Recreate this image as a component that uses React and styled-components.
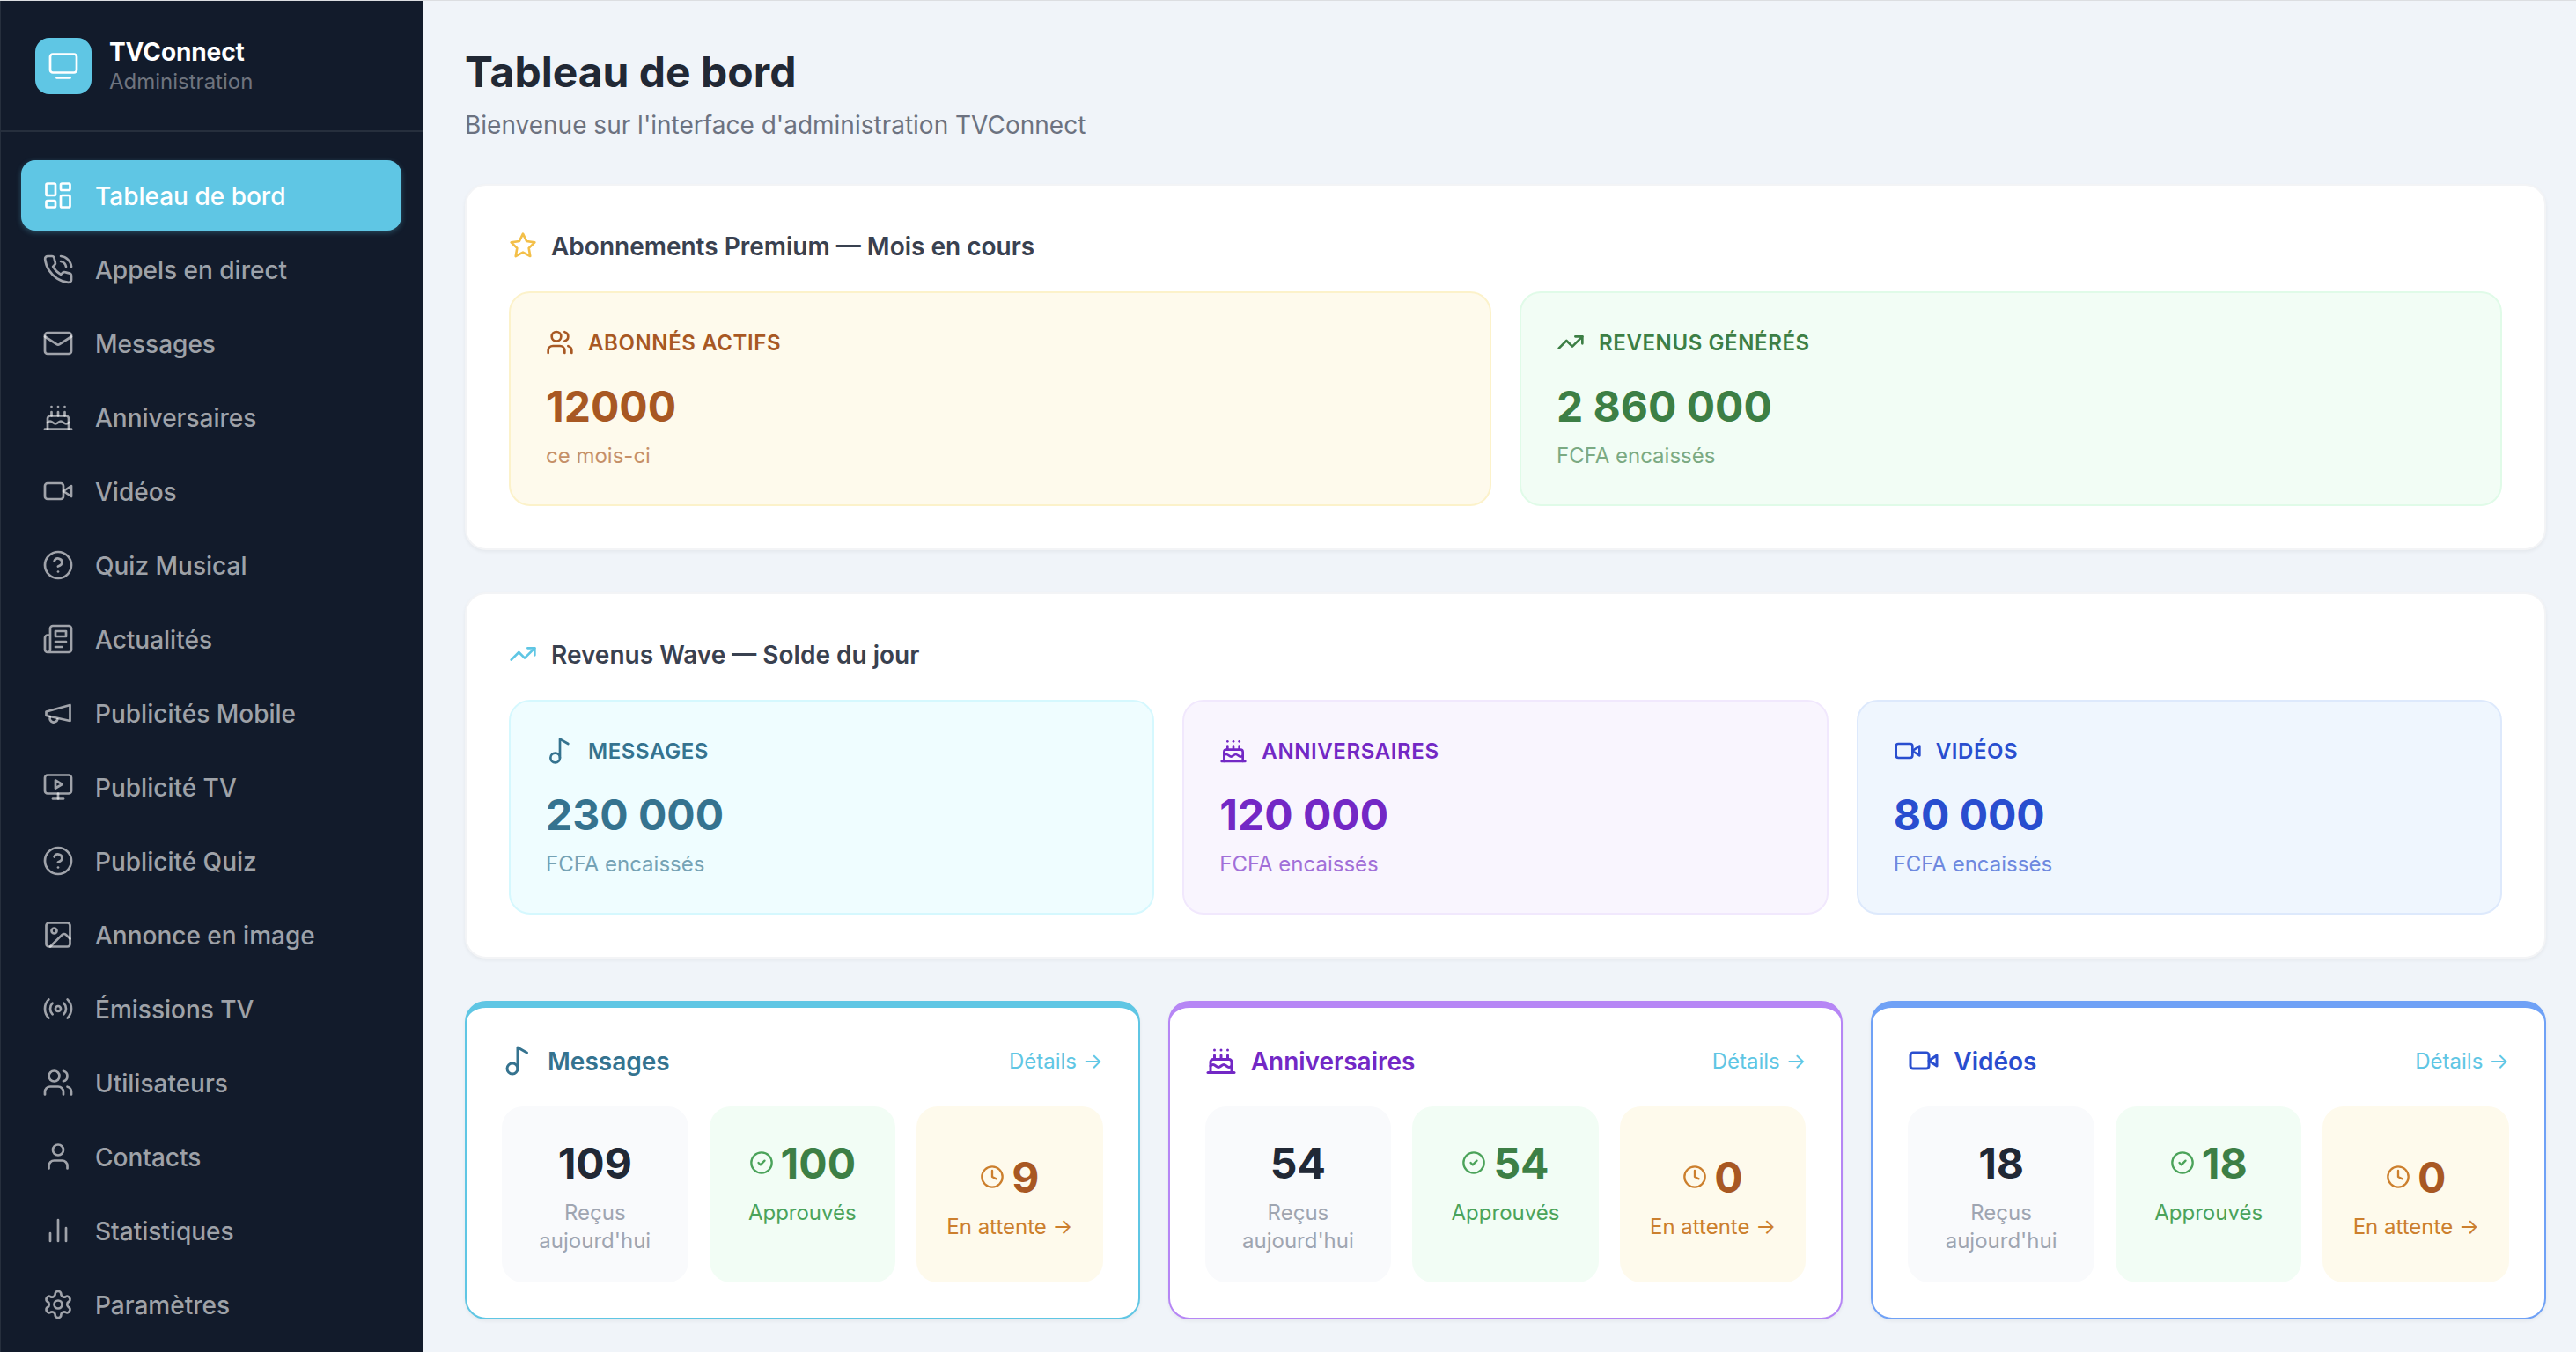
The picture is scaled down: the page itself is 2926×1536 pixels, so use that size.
import styled, { createGlobalStyle } from "styled-components"
import {
  Cake,
  CircleCheck,
  CircleHelp,
  Clock,
  Image as ImageIcon,
  LayoutDashboard,
  Music2,
  Radio,
  TrendingUp,
  TvMinimal,
  User,
  Users,
} from "lucide-react"

const GlobalStyle = createGlobalStyle`
* {
  box-sizing: border-box;
  margin: 0;
  padding: 0;
}

body {
  font-family: Inter, "Liberation Sans", sans-serif;
  background-color: #f0f4f9;
  overflow: hidden;
}
`

const Page = styled.div`
  display: flex;
  height: 1536px;
  border-top: 1px solid #dcdee1;
  overflow: hidden;
`

/* ---------- sidebar ---------- */

const Sidebar = styled.aside`
  width: 480px;
  flex-shrink: 0;
  background-color: #121b2b;
  border-left: 1px solid #262f3d;
`

const Brand = styled.div`
  display: flex;
  align-items: center;
  gap: 20px;
  height: 149px;
  padding: 0 39px;
  border-bottom: 2px solid #262f3d;
`

const Logo = styled.div`
  width: 64px;
  height: 64px;
  display: flex;
  align-items: center;
  justify-content: center;
  border-radius: 16px;
  background-color: #5fc6e4;
  color: white;
`

const BrandText = styled.div`
  padding-top: 3px;
`

const BrandName = styled.p`
  font-size: 28px;
  line-height: 33px;
  font-weight: 700;
  letter-spacing: -0.1px;
  color: white;
`

const BrandRole = styled.p`
  font-size: 24px;
  line-height: 33px;
  color: #6f747e;
`

const Nav = styled.nav`
  display: flex;
  flex-direction: column;
  gap: 4px;
  padding: 32px 24px 0 23px;
`

const NavItem = styled.a`
  display: flex;
  align-items: center;
  gap: 24px;
  height: 80px;
  flex-shrink: 0;
  padding: 0 24px;
  border-radius: 16px;
  font-size: 28px;
  font-weight: 500;
  color: ${(p) => (p.$active ? "white" : "rgba(255,255,255,0.6)")};
  background-color: ${(p) => (p.$active ? "#5fc6e4" : "transparent")};
  box-shadow: ${(p) => (p.$active ? "0 2px 6px rgba(95,198,228,0.3)" : "none")};
`

// text sitting next to an icon, nudged onto its optical centre
const Label = styled.span`
  padding-top: 2px;
`

/* ---------- content ---------- */

const Main = styled.main`
  flex: 1;
  min-width: 0;
  padding: 48px 34px 0 48px;
`

const Title = styled.h1`
  font-size: 48px;
  line-height: 66px;
  font-weight: 700;
  color: #212835;
`

const Subtitle = styled.p`
  margin: 7px 0 46px;
  font-size: 28px;
  line-height: 41px;
  color: #6c7280;
`

const Card = styled.section`
  height: 416px;
  margin-bottom: 48px;
  padding: 48px;
  background-color: white;
  border: 2px solid #f3f4f6;
  border-radius: 24px;
  box-shadow: 0 2px 4px rgba(0, 0, 0, 0.05);
`

const CardHeading = styled.h2`
  display: flex;
  align-items: center;
  gap: 16px;
  height: 40px;
  margin-bottom: 32px;
  font-size: 28px;
  font-weight: 600;
  color: #394150;
`

const Grid = styled.div`
  display: grid;
  grid-template-columns: repeat(${(p) => p.$cols}, minmax(0, 1fr));
  gap: ${(p) => p.$gap || 32}px;
`

const Stat = styled.div`
  height: 244px;
  padding: 40px;
  border: 2px solid ${(p) => p.$tone.border};
  border-radius: 24px;
  background-color: ${(p) => p.$tone.bg};
  color: ${(p) => p.$tone.text};
`

const StatLabel = styled.div`
  display: flex;
  align-items: center;
  gap: 16px;
  height: 32px;
  margin-bottom: 24px;
  font-size: 24px;
  font-weight: 600;
  letter-spacing: 0.025em;
  text-transform: uppercase;
`

const Value = styled.p`
  height: 64px;
  font-size: 48px;
  line-height: 66px;
  font-weight: 700;
  white-space: nowrap;
`

const StatNote = styled.p`
  margin-top: 9px;
  font-size: 24px;
  line-height: 32px;
  opacity: 0.65;
`

const Summary = styled.section`
  height: 362px;
  padding: 40px;
  background-color: white;
  border: 2px solid ${(p) => p.$color};
  border-top-width: 8px;
  border-radius: 24px;
  box-shadow: 0 2px 4px rgba(0, 0, 0, 0.05);
`

const SummaryHeader = styled.div`
  display: flex;
  align-items: center;
  justify-content: space-between;
  height: 40px;
  margin-bottom: 32px;
`

const SummaryTitle = styled.h3`
  display: flex;
  align-items: center;
  gap: 16px;
  font-size: 28px;
  font-weight: 600;
  color: ${(p) => p.$color};
`

const DetailsLink = styled.a`
  padding-top: 2px;
  font-size: 24px;
  line-height: 32px;
  color: #5fc6e4;
`

const Tile = styled.div`
  display: flex;
  flex-direction: column;
  align-items: center;
  justify-content: ${(p) => (p.$center ? "center" : "flex-start")};
  height: 200px;
  padding: 32px 16px 31px;
  border-radius: 24px;
  text-align: center;
  background-color: ${(p) => p.$bg};
  color: ${(p) => p.$color};
`

const TileTop = styled.div`
  display: flex;
  align-items: center;
  gap: 8px;

  svg {
    color: ${(p) => p.$icon};
  }
`

const TileLabel = styled.p`
  max-width: 148px;
  margin-top: 9px;
  font-size: 24px;
  line-height: 32px;
  color: ${(p) => p.$color};
`

/* ---------- icons missing from lucide-react in this shape ---------- */

const Svg = ({ size = 24, strokeWidth = 2, color = "currentColor", children }) => (
  <svg
    width={size}
    height={size}
    viewBox="0 0 24 24"
    fill="none"
    stroke={color}
    strokeWidth={strokeWidth}
    strokeLinecap="round"
    strokeLinejoin="round"
  >
    {children}
  </svg>
)

const PhoneCall = (props) => (
  <Svg {...props}>
    <path d="M22 16.92v3a2 2 0 0 1-2.18 2 19.79 19.79 0 0 1-8.63-3.07 19.5 19.5 0 0 1-6-6 19.79 19.79 0 0 1-3.07-8.67A2 2 0 0 1 4.11 2h3a2 2 0 0 1 2 1.72 12.84 12.84 0 0 0 .7 2.81 2 2 0 0 1-.45 2.11L8.09 9.91a16 16 0 0 0 6 6l1.27-1.27a2 2 0 0 1 2.11-.45 12.84 12.84 0 0 0 2.81.7A2 2 0 0 1 22 16.92z" />
    <path d="M14.05 2a9 9 0 0 1 8 7.94" />
    <path d="M14.05 6A5 5 0 0 1 18 10" />
  </Svg>
)

const Mail = (props) => (
  <Svg {...props}>
    <rect width="20" height="16" x="2" y="4" rx="2" />
    <path d="m22 7-8.97 5.7a1.94 1.94 0 0 1-2.06 0L2 7" />
  </Svg>
)

const Video = (props) => (
  <Svg {...props}>
    <path d="m22 8-6 4 6 4V8Z" />
    <rect width="14" height="12" x="2" y="6" rx="2" />
  </Svg>
)

const Newspaper = (props) => (
  <Svg {...props}>
    <path d="M4 22h16a2 2 0 0 0 2-2V4a2 2 0 0 0-2-2H8a2 2 0 0 0-2 2v16a2 2 0 0 1-2 2Zm0 0a2 2 0 0 1-2-2v-9c0-1.1.9-2 2-2h2" />
    <path d="M18 14h-8" />
    <path d="M15 18h-5" />
    <path d="M10 6h8v4h-8V6Z" />
  </Svg>
)

const Megaphone = (props) => (
  <Svg {...props}>
    <path d="m3 11 18-5v12L3 14v-3z" />
    <path d="M11.6 16.8a3 3 0 1 1-5.8-1.6" />
  </Svg>
)

const MonitorPlay = (props) => (
  <Svg {...props}>
    <path d="m10 7 5 3-5 3Z" />
    <rect width="20" height="14" x="2" y="3" rx="2" />
    <path d="M12 17v4" />
    <path d="M8 21h8" />
  </Svg>
)

const BarChart = (props) => (
  <Svg {...props}>
    <path d="M18 20V10" />
    <path d="M12 20V4" />
    <path d="M6 20v-6" />
  </Svg>
)

const Settings = (props) => (
  <Svg {...props}>
    <path d="M12.22 2h-.44a2 2 0 0 0-2 2v.18a2 2 0 0 1-1 1.73l-.43.25a2 2 0 0 1-2 0l-.15-.08a2 2 0 0 0-2.73.73l-.22.38a2 2 0 0 0 .73 2.73l.15.1a2 2 0 0 1 1 1.72v.51a2 2 0 0 1-1 1.74l-.15.09a2 2 0 0 0-.73 2.73l.22.38a2 2 0 0 0 2.73.73l.15-.08a2 2 0 0 1 2 0l.43.25a2 2 0 0 1 1 1.73V20a2 2 0 0 0 2 2h.44a2 2 0 0 0 2-2v-.18a2 2 0 0 1 1-1.73l.43-.25a2 2 0 0 1 2 0l.15.08a2 2 0 0 0 2.73-.73l.22-.39a2 2 0 0 0-.73-2.73l-.15-.08a2 2 0 0 1-1-1.74v-.5a2 2 0 0 1 1-1.74l.15-.09a2 2 0 0 0 .73-2.73l-.22-.38a2 2 0 0 0-2.73-.73l-.15.08a2 2 0 0 1-2 0l-.43-.25a2 2 0 0 1-1-1.73V4a2 2 0 0 0-2-2z" />
    <circle cx="12" cy="12" r="3" />
  </Svg>
)

const Star = (props) => (
  <Svg {...props}>
    <polygon points="12 2 15.09 8.26 22 9.27 17 14.14 18.18 21.02 12 17.77 5.82 21.02 7 14.14 2 9.27 8.91 8.26 12 2" />
  </Svg>
)

/* ---------- data ---------- */

const navItems = [
  { label: "Tableau de bord", icon: LayoutDashboard },
  { label: "Appels en direct", icon: PhoneCall },
  { label: "Messages", icon: Mail },
  { label: "Anniversaires", icon: Cake },
  { label: "Vidéos", icon: Video },
  { label: "Quiz Musical", icon: CircleHelp },
  { label: "Actualités", icon: Newspaper },
  { label: "Publicités Mobile", icon: Megaphone },
  { label: "Publicité TV", icon: MonitorPlay },
  { label: "Publicité Quiz", icon: CircleHelp },
  { label: "Annonce en image", icon: ImageIcon },
  { label: "Émissions TV", icon: Radio },
  { label: "Utilisateurs", icon: Users },
  { label: "Contacts", icon: User },
  { label: "Statistiques", icon: BarChart },
  { label: "Paramètres", icon: Settings },
]

const tones = {
  amber: { bg: "#fefaec", border: "#fcf2ca", text: "#a85823" },
  green: { bg: "#f2fdf5", border: "#e0fbe8", text: "#3d7f45" },
  cyan: { bg: "#effdff", border: "#d5f8fe", text: "#35738f" },
  purple: { bg: "#f9f5fe", border: "#f1e8fd", text: "#7328c5" },
  blue: { bg: "#eff6fe", border: "#dde9fc", text: "#294ecf" },
}

const premium = [
  { label: "Abonnés actifs", value: "12000", note: "ce mois-ci", icon: Users, tone: tones.amber },
  { label: "Revenus générés", value: "2 860 000", note: "FCFA encaissés", icon: TrendingUp, tone: tones.green },
]

const wave = [
  { label: "Messages", value: "230 000", note: "FCFA encaissés", icon: Music2, tone: tones.cyan },
  { label: "Anniversaires", value: "120 000", note: "FCFA encaissés", icon: Cake, tone: tones.purple },
  { label: "Vidéos", value: "80 000", note: "FCFA encaissés", icon: Video, tone: tones.blue },
]

const summaries = [
  { title: "Messages", icon: Music2, color: "#35738f", border: "#5fc6e4", received: 109, approved: 100, pending: 9 },
  { title: "Anniversaires", icon: Cake, color: "#7328c5", border: "#b686f5", received: 54, approved: 54, pending: 0 },
  { title: "Vidéos", icon: Video, color: "#294ecf", border: "#6fa1f6", received: 18, approved: 18, pending: 0 },
]

const StatCard = ({ item }) => {
  const Icon = item.icon
  return (
    <Stat $tone={item.tone}>
      <StatLabel>
        <Icon size={32} />
        {item.label}
      </StatLabel>
      <Value>{item.value}</Value>
      <StatNote>{item.note}</StatNote>
    </Stat>
  )
}

const SummaryCard = ({ item }) => {
  const Icon = item.icon
  return (
    <Summary $color={item.border}>
      <SummaryHeader>
        <SummaryTitle $color={item.color}>
          <Icon size={36} />
          <Label>{item.title}</Label>
        </SummaryTitle>
        <DetailsLink>Détails →</DetailsLink>
      </SummaryHeader>
      <Grid $cols={3} $gap={24}>
        <Tile $bg="#f9fafc" $color="#212835">
          <Value>{item.received}</Value>
          <TileLabel $color="#9fa5b1">Reçus aujourd'hui</TileLabel>
        </Tile>
        <Tile $bg="#f2fdf5" $color="#3d7f45">
          <TileTop $icon="#4ba35a">
            <CircleCheck size={28} />
            <Value>{item.approved}</Value>
          </TileTop>
          <TileLabel $color="#4ba35a">Approuvés</TileLabel>
        </Tile>
        <Tile $bg="#fefaec" $color="#a85823" $center>
          <TileTop $icon="#cc7f2d">
            <Clock size={28} />
            <Value>{item.pending}</Value>
          </TileTop>
          <TileLabel $color="#cc7f2d">En attente →</TileLabel>
        </Tile>
      </Grid>
    </Summary>
  )
}

const App = () => {
  return (
    <Page>
      <GlobalStyle />
      <Sidebar>
        <Brand>
          <Logo>
            <TvMinimal size={36} strokeWidth={1.8} />
          </Logo>
          <BrandText>
            <BrandName>TVConnect</BrandName>
            <BrandRole>Administration</BrandRole>
          </BrandText>
        </Brand>
        <Nav>
          {navItems.map(({ label, icon: Icon }, i) => (
            <NavItem key={label} $active={i === 0}>
              <Icon size={36} strokeWidth={1.8} />
              <Label>{label}</Label>
            </NavItem>
          ))}
        </Nav>
      </Sidebar>
      <Main>
        <Title>Tableau de bord</Title>
        <Subtitle>Bienvenue sur l'interface d'administration TVConnect</Subtitle>

        <Card>
          <CardHeading>
            <Star size={32} color="#f3bf48" />
            <Label>Abonnements Premium — Mois en cours</Label>
          </CardHeading>
          <Grid $cols={2}>
            {premium.map((item) => (
              <StatCard key={item.label} item={item} />
            ))}
          </Grid>
        </Card>

        <Card>
          <CardHeading>
            <TrendingUp size={32} color="#5fc6e4" />
            <Label>Revenus Wave — Solde du jour</Label>
          </CardHeading>
          <Grid $cols={3}>
            {wave.map((item) => (
              <StatCard key={item.label} item={item} />
            ))}
          </Grid>
        </Card>

        <Grid $cols={3}>
          {summaries.map((item) => (
            <SummaryCard key={item.title} item={item} />
          ))}
        </Grid>
      </Main>
    </Page>
  )
}

export default App
